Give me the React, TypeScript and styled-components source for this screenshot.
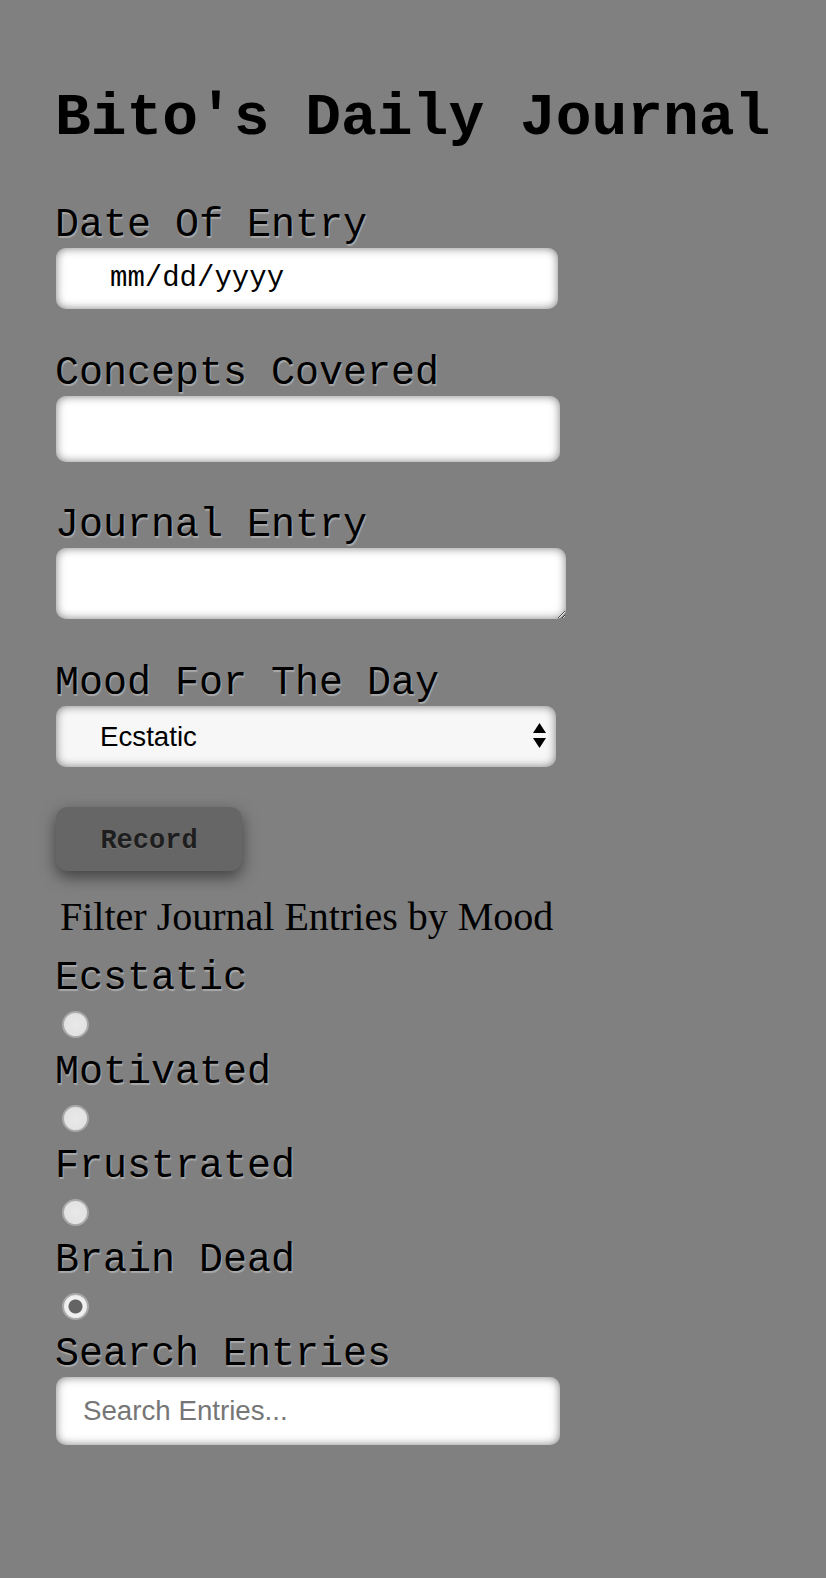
import React, { useState } from "react";
import styled, { createGlobalStyle } from "styled-components";

const GlobalStyle = createGlobalStyle`
  html, body {
    margin: 0;
    padding: 0;
    background: #808080;
  }
  body {
    font-family: "Courier New", "Liberation Mono", monospace;
  }
`;

const Page = styled.main`
  min-height: 1578px;
  box-sizing: border-box;
  padding: 85px 0 0 56px;
  background: #808080;
`;

const Title = styled.h1`
  margin: 0 0 52px -1px;
  font-family: "Courier New", "Liberation Mono", monospace;
  font-weight: bold;
  font-size: 59.6px;
  line-height: 66px;
  color: #000;
`;

const Form = styled.form`
  display: flex;
  flex-direction: column;
  align-items: flex-start;
`;

const Field = styled.div<{ $gap: number }>`
  display: flex;
  flex-direction: column;
  align-items: flex-start;
  margin-bottom: ${(p) => p.$gap}px;
`;

const Label = styled.label`
  display: block;
  margin-left: -1px;
  font-family: "Courier New", "Liberation Mono", monospace;
  font-size: 40px;
  line-height: 45px;
  color: #000;
  text-shadow: 1px 2px 1px #a9a9a9;
  white-space: nowrap;
`;

const fieldBase = `
  box-sizing: border-box;
  border: none;
  outline: none;
  border-radius: 10px;
  background: #fff;
  box-shadow: inset 0 0 10px rgba(0, 0, 0, 0.5);
`;

const TextInput = styled.input<{ $w: number; $h: number; $pad: number }>`
  ${fieldBase}
  width: ${(p) => p.$w}px;
  height: ${(p) => p.$h}px;
  padding: 0 0 0 ${(p) => p.$pad}px;
  font-family: "Liberation Sans", Arial, sans-serif;
  font-size: 27.7px;
  color: #000;
  &::placeholder {
    color: #767676;
  }
`;

const DateInput = styled(TextInput)`
  font-family: "Courier New", "Liberation Mono", monospace;
  font-size: 29px;
  &::placeholder {
    color: #000;
  }
`;

const TextArea = styled.textarea`
  ${fieldBase}
  display: block;
  width: 510px;
  height: 71px;
  padding: 8px 20px;
  font-family: "Liberation Sans", Arial, sans-serif;
  font-size: 20px;
  resize: both;
`;

const SelectWrap = styled.div`
  position: relative;
  width: 500px;
  height: 61px;
`;

const Select = styled.select`
  ${fieldBase}
  appearance: none;
  -webkit-appearance: none;
  width: 100%;
  height: 100%;
  padding: 0 0 0 44px;
  background: #f7f7f7;
  font-family: "Liberation Sans", Arial, sans-serif;
  font-size: 27.7px;
  color: #000;
`;

const Arrows = styled.svg`
  position: absolute;
  right: 10px;
  top: 17px;
  width: 13px;
  height: 26px;
  pointer-events: none;
`;

const RecordButton = styled.button`
  width: 186px;
  height: 64px;
  margin-bottom: 24px;
  border: none;
  border-radius: 12px;
  background: #666666;
  box-shadow: 0 6px 16px rgba(0, 0, 0, 0.5);
  font-family: "Courier New", "Liberation Mono", monospace;
  font-weight: bold;
  font-size: 27px;
  color: #1e1e1e;
  text-shadow: 0 1px 1px #777;
  cursor: pointer;
  padding: 4px 0 0;
`;

const FilterHeading = styled.div`
  margin: 0 0 17px 4px;
  font-family: "Times New Roman", "Liberation Serif", serif;
  font-size: 40px;
  line-height: 44px;
  color: #000;
`;

const Option = styled.div`
  display: flex;
  flex-direction: column;
  align-items: flex-start;
`;

const Radio = styled.input`
  appearance: none;
  -webkit-appearance: none;
  box-sizing: border-box;
  width: 27px;
  height: 27px;
  margin: 10px 0 12px 6px;
  border-radius: 50%;
  border: 2px solid #a9a9a9;
  background: radial-gradient(circle, #e9e9e9 0%, #e2e2e2 70%, #d2d2d2 100%);
  cursor: pointer;
  &:checked {
    background: radial-gradient(circle, #646464 0, #646464 6.5px, #f2f2f2 7.5px, #e4e4e4 100%);
  }
`;

const moods = ["Ecstatic", "Motivated", "Frustrated", "Brain Dead"];

export default function App() {
  const [mood, setMood] = useState("Brain Dead");
  return (
    <>
      <GlobalStyle />
      <Page>
        <Title>Bito's Daily Journal</Title>
        <Form onSubmit={(e) => e.preventDefault()}>
          <Field $gap={42}>
            <Label htmlFor="date">Date Of Entry</Label>
            <DateInput id="date" type="text" placeholder="mm/dd/yyyy" $w={502} $h={61} $pad={54} />
          </Field>
          <Field $gap={41}>
            <Label htmlFor="concepts">Concepts Covered</Label>
            <TextInput id="concepts" type="text" $w={504} $h={66} $pad={20} />
          </Field>
          <Field $gap={42}>
            <Label htmlFor="entry">Journal Entry</Label>
            <TextArea id="entry" />
          </Field>
          <Field $gap={40}>
            <Label htmlFor="mood">Mood For The Day</Label>
            <SelectWrap>
              <Select id="mood" defaultValue="Ecstatic">
                {moods.map((m) => (
                  <option key={m}>{m}</option>
                ))}
              </Select>
              <Arrows viewBox="0 0 13 26">
                <path d="M6.5 0 L13 10 L0 10 Z" fill="#000" />
                <path d="M0 15 L13 15 L6.5 25 Z" fill="#000" />
              </Arrows>
            </SelectWrap>
          </Field>
          <RecordButton type="submit">Record</RecordButton>
        </Form>
        <FilterHeading>Filter Journal Entries by Mood</FilterHeading>
        {moods.map((m) => (
          <Option key={m}>
            <Label htmlFor={`f-${m}`}>{m}</Label>
            <Radio
              id={`f-${m}`}
              type="radio"
              name="filter"
              checked={mood === m}
              onChange={() => setMood(m)}
            />
          </Option>
        ))}
        <Field $gap={0}>
          <Label htmlFor="search">Search Entries</Label>
          <TextInput id="search" type="text" placeholder="Search Entries..." $w={504} $h={68} $pad={27} />
        </Field>
      </Page>
    </>
  );
}
